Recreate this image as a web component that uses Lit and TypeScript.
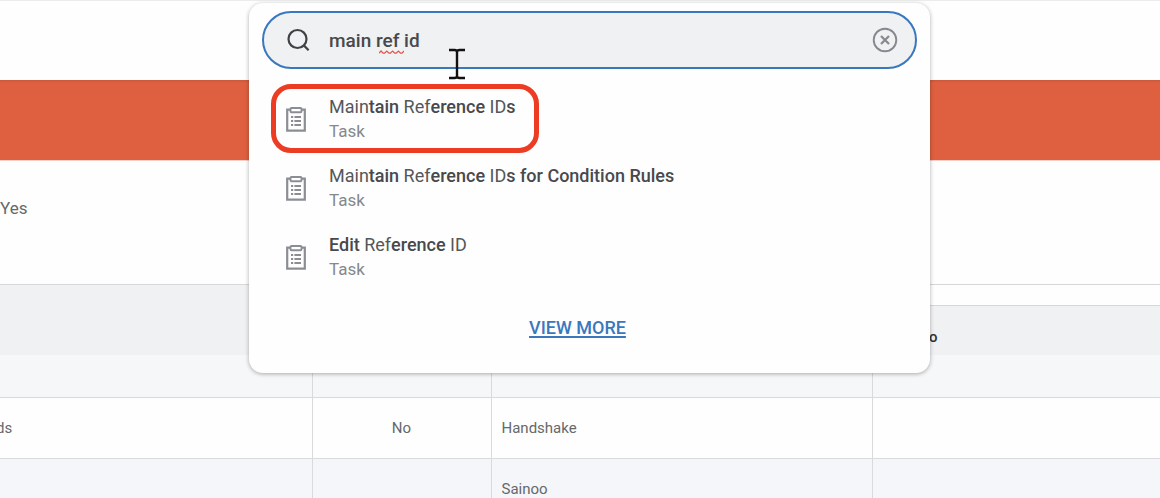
import { LitElement, html, css, svg } from "lit";
import { customElement, property, state } from "lit/decorators.js";

interface Part {
  text: string;
  strong: boolean;
}

interface Result {
  parts: Part[];
  kind: string;
  marked?: boolean;
}

const plain = (text: string): Part => ({ text, strong: false });
const strong = (text: string): Part => ({ text, strong: true });

const RESULTS: Result[] = [
  {
    parts: [plain("Main"), strong("tain"), plain(" Ref"), strong("erence"), plain(" ID"), strong("s")],
    kind: "Task",
    marked: true,
  },
  {
    parts: [
      plain("Main"), strong("tain"), plain(" Ref"), strong("erence"), plain(" ID"),
      strong("s for Condition Rules"),
    ],
    kind: "Task",
  },
  {
    parts: [strong("Edit"), plain(" Ref"), strong("erence"), plain(" ID")],
    kind: "Task",
  },
];

const ROWS: string[][] = [
  ["", "", "", ""],
  ["ds", "No", "Handshake", ""],
  ["", "", "Sainoo", ""],
];

const clipboard = svg`
  <path d="M1.200 2.700h17.600v21h-17.600z" fill="none" stroke="#8a8e94" stroke-width="2.200"/>
  <rect x="4.500" y="1" width="11" height="4.200" rx="1" fill="#fff" stroke="#8a8e94" stroke-width="1.900"/>
  <path d="M5 10h2.200M5 14h2.200M5 18h2.200M8.400 10h6.600M8.400 14h6.600M8.400 18h6.600" stroke="#8a8e94" stroke-width="1.900"/>`;

@customElement("search-result")
export class SearchResult extends LitElement {
  @property({ attribute: false }) result!: Result;

  static styles = css`
    :host { display: block; }
    .item {
      position: relative;
      display: flex;
      align-items: center;
      gap: 23px;
      padding: 10px 24px 9px 37px;
      color: #55575a;
      text-decoration: none;
      font-size: 18px;
      line-height: 25px;
    }
    .icon { flex: none; width: 20px; height: 25px; }
    .title { display: block; white-space: pre-wrap; }
    .strong { font-weight: 500; color: #48494c; }
    .kind { display: block; font-size: 17px; color: #85888d; }
    .marker {
      position: absolute;
      inset: 0 auto 0 22px;
      width: 268px;
      box-sizing: border-box;
      border: 5px solid #ec3c23;
      border-radius: 20px;
      pointer-events: none;
    }
  `;

  render() {
    const { parts, kind, marked } = this.result;
    return html`<a class="item" href="#">
      <svg class="icon" viewBox="0 0 20 25" aria-hidden="true">${clipboard}</svg>
      <span>
        <span class="title">${parts.map((p) => (p.strong ? html`<span class="strong">${p.text}</span>` : p.text))}</span>
        <span class="kind">${kind}</span>
      </span>
      ${marked ? html`<span class="marker"></span>` : ""}
    </a>`;
  }
}

@customElement("app-root")
export class AppRoot extends LitElement {
  @state() private query = "main ref id";

  static styles = css`
    :host {
      display: block;
      position: relative;
      height: 100vh;
      overflow: hidden;
      background: #fefefe;
      color: #66686b;
      font-family: Roboto, sans-serif;
    }
    .topbar { height: 79px; border-top: 1px solid #ececec; }
    .banner {
      height: 80px;
      background: linear-gradient(#c9583c, #de6040 3px);
      box-shadow: 0 1px 0 #f3cfc6;
    }
    .summary { height: 84px; padding-top: 40px; }
    .value { margin: 0; font-size: 17px; line-height: 17px; }
    .grid {
      width: 100%;
      table-layout: fixed;
      border-collapse: collapse;
      font-size: 15px;
      line-height: 20px;
    }
    .flag-col { width: 179px; }
    .name-col { width: 312px; }
    .text-col { width: 381px; }
    .grid th, .grid td { padding: 0 10px; box-sizing: border-box; }
    .grid th {
      border-top: 1px solid #d6d7d9;
      background: #f0f1f3;
      color: #303236;
      font-weight: 500;
      text-align: left;
    }
    .grid .group { height: 21px; background: #fefefe; }
    .grid .heading { height: 49px; padding: 14px 0 0 57px; }
    .grid td {
      height: 61px;
      border: 1px solid #d9dadc;
      border-width: 0 1px 1px 0;
      background: #fefefe;
    }
    .grid td:last-child { border-right: 0; }
    .grid .filter td { height: 43px; background: #f6f7f9; }
    .grid .tinted td { background: #f5f6f9; }
    .grid .name { padding: 0; text-indent: -4px; }
    .grid .flag { text-align: center; }
    .panel {
      position: absolute;
      top: 3px;
      left: 249px;
      right: 230px;
      box-sizing: border-box;
      padding-top: 8px;
      border-radius: 14px;
      background: #fefefe;
      box-shadow: 0 1px 4px rgba(0, 0, 0, 0.32);
    }
    .search {
      position: relative;
      display: flex;
      align-items: center;
      gap: 19px;
      height: 58px;
      margin: 0 13px 15px;
      padding: 0 17px 0 23px;
      box-sizing: border-box;
      border: 2px solid #3a78be;
      border-radius: 29px;
      background: #f0f1f3;
    }
    .lens { flex: none; width: 23px; height: 24px; }
    .box {
      flex: 1;
      min-width: 0;
      padding: 2px 0 0;
      border: 0;
      outline: 0;
      background: none;
      color: #48494c;
      font: 500 19px/24px Roboto, sans-serif;
    }
    .squiggle {
      position: absolute;
      left: 115px;
      top: 37px;
      width: 25px;
      height: 4px;
    }
    .clear {
      flex: none;
      width: 26px;
      height: 26px;
      padding: 0;
      border: 0;
      background: none;
      cursor: pointer;
    }
    .clear svg { display: block; }
    .list { margin: 0; padding: 0; list-style: none; }
    .more { display: flex; justify-content: center; padding: 25px 24px 33px 0; }
    .more a {
      color: #3a78be;
      font-size: 18px;
      line-height: 24px;
      font-weight: 500;
      text-underline-offset: 2px;
      text-decoration-thickness: 2px;
    }
    .pointer {
      position: absolute;
      left: 448px;
      top: 48px;
      width: 18px;
      height: 32px;
      pointer-events: none;
    }
  `;

  private onInput(e: Event) {
    this.query = (e.target as HTMLInputElement).value;
  }

  private clear() {
    this.query = "";
  }

  render() {
    return html`
      <header class="topbar"></header>
      <div class="banner"></div>
      <section class="summary"><p class="value">Yes</p></section>
      <table class="grid">
        <colgroup>
          <col class="name-col" /><col class="flag-col" /><col class="text-col" /><col />
        </colgroup>
        <thead>
          <tr>
            <th rowspan="2"></th><th rowspan="2"></th><th rowspan="2"></th>
            <th class="group"></th>
          </tr>
          <tr><th class="heading">o</th></tr>
        </thead>
        <tbody>
          ${ROWS.map(
            ([name, flag, text, last], i) => html`<tr class=${["filter", "", "tinted"][i]}>
              <td class="name">${name}</td>
              <td class="flag">${flag}</td>
              <td>${text}</td>
              <td>${last}</td>
            </tr>`
          )}
        </tbody>
      </table>

      <div class="panel">
        <div class="search">
          <svg class="lens" viewBox="0 0 23 24" fill="none" stroke="#404246" stroke-width="2.2" aria-hidden="true">
            <circle cx="10.5" cy="11" r="9" /><path d="M16.8 17.4l4.800 4.800" />
          </svg>
          <input class="box" type="text" aria-label="Search" spellcheck="false"
            .value=${this.query} @input=${this.onInput} />
          ${this.query.includes(" ref ")
            ? html`<svg class="squiggle" viewBox="0 0 25 4" fill="none" stroke="#e0554a" stroke-width="1.2" aria-hidden="true">
                <path d="M0 3.2L2 1l2.1 2.2h1.5L7.8 1l2.1 2.2h1.5L13.6 1l2.1 2.2h1.5L19.4 1l2.1 2.2h1.5L25 1" />
              </svg>`
            : ""}
          <button class="clear" type="button" aria-label="Clear search" @click=${this.clear}>
            <svg width="26" height="26" viewBox="0 0 26 26" fill="none" stroke="#85898f" stroke-width="1.9">
              <circle cx="13" cy="13" r="11.300" />
              <path d="M9 9l8 8M17 9l-8 8" stroke-width="2.2" />
            </svg>
          </button>
        </div>
        <ul class="list">
          ${RESULTS.map((r) => html`<li><search-result .result=${r}></search-result></li>`)}
        </ul>
        <div class="more"><a href="#">VIEW MORE</a></div>
      </div>

      <svg class="pointer" viewBox="0 0 18 32" fill="none" stroke="#111" stroke-width="2.400" aria-hidden="true">
        <path d="M1 2h5.500q2.500 0 2.500 2 0-2 2.500-2H17M9 3v26M1 30h5.500q2.500 0 2.500-2 0 2 2.500 2H17" />
      </svg>
    `;
  }
}
